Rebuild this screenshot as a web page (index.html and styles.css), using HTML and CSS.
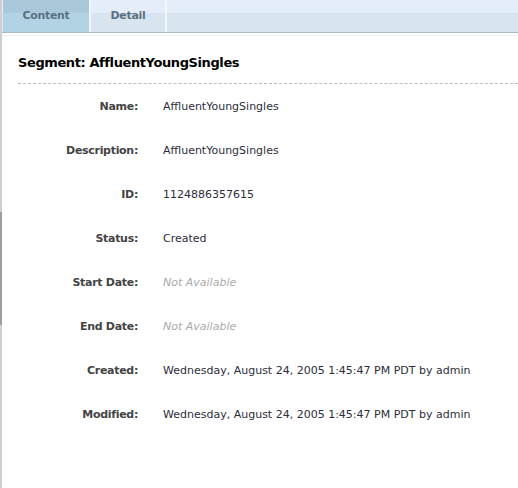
FILE: index.html
```html
<!DOCTYPE html>
<html>
<head>
<meta charset="utf-8">
<title>Segment: AffluentYoungSingles</title>
<link rel="stylesheet" href="styles.css">
</head>
<body>
<div class="page">
  <div class="tabs">
    <div class="tab tab-active">Content</div>
    <div class="tab">Detail</div>
    <div class="tab-fill"></div>
  </div>
  <div class="content">
    <h1 class="title">Segment: AffluentYoungSingles</h1>
    <div class="props">
      <div class="label">Name:</div><div class="value">AffluentYoungSingles</div>
      <div class="label">Description:</div><div class="value">AffluentYoungSingles</div>
      <div class="label">ID:</div><div class="value">1124886357615</div>
      <div class="label">Status:</div><div class="value">Created</div>
      <div class="label">Start Date:</div><div class="value na">Not Available</div>
      <div class="label">End Date:</div><div class="value na">Not Available</div>
      <div class="label">Created:</div><div class="value">Wednesday, August 24, 2005 1:45:47 PM PDT by admin</div>
      <div class="label">Modified:</div><div class="value">Wednesday, August 24, 2005 1:45:47 PM PDT by admin</div>
    </div>
  </div>
  <div class="splitter"></div>
</div>
</body>
</html>
```
FILE: styles.css
```css
html, body {
  margin: 0;
  padding: 0;
  background: #fff;
}
body {
  font-family: "DejaVu Sans", Verdana, sans-serif;
  font-size: 11px;
  color: #333;
}
.page {
  position: relative;
  min-height: 488px;
  border-left: 2px solid #cfcfcf;
  box-sizing: border-box;
}
.splitter {
  position: absolute;
  left: -2px;
  top: 212px;
  width: 2px;
  height: 113px;
  background: #9e9e9e;
}
.tabs {
  display: flex;
  height: 32px;
  padding-left: 1px;
  background: linear-gradient(#e3eefa 0, #e3eefa 13px, #d8e5f0 13px, #d8e5f0 100%);
  border-bottom: 1px solid #a9bccb;
  box-shadow: 0 2px 0 #fff, 0 3px 0 #e8eff4;
}
.tab {
  width: 74px;
  line-height: 32px;
  text-align: center;
  font-weight: bold;
  font-size: 11px;
  letter-spacing: -0.3px;
  color: #5d7080;
  border-right: 2px solid #f2f7fb;
}
.tab-active {
  width: 86px;
  background: linear-gradient(#a9c8da 0, #a9c8da 13px, #b2d3e4 13px, #b2d3e4 100%);
  color: #5a7080;
}
.tab-fill {
  flex: 1;
}
.content {
  padding: 20px 0 0 16px;
}
.title {
  margin: 0;
  font-size: 13px;
  letter-spacing: -0.4px;
  font-weight: bold;
  color: #000;
  line-height: 20px;
  padding-bottom: 10px;
  border-bottom: 1px dashed #bdbdbd;
}
.props {
  display: grid;
  grid-template-columns: 120px 1fr;
  grid-auto-rows: 44px;
  column-gap: 25px;
  align-items: center;
}
.label {
  text-align: right;
  font-weight: bold;
  color: #444;
  font-size: 11px;
  letter-spacing: -0.3px;
  padding-top: 1px;
}
.value {
  color: #2d2d3a;
  padding-top: 1px;
}
.na {
  font-style: italic;
  color: #aaa;
}
```
